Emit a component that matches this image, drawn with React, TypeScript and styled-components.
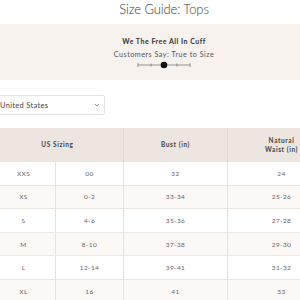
import React from "react";
import styled, { createGlobalStyle } from "styled-components";

const Global = createGlobalStyle`
  html, body { margin: 0; padding: 0; background: #ffffff; overflow: hidden; }
  body { font-family: "Lato", "Open Sans", sans-serif; }
`;

const Page = styled.div`
  width: 346px;
  margin-left: -9px;
  display: flex;
  flex-direction: column;
`;

const Title = styled.h1`
  margin: 0;
  height: 24px;
  padding-top: 2px;
  box-sizing: border-box;
  text-align: center;
  font-family: "Lato", sans-serif;
  font-weight: 300;
  font-size: 13px;
  line-height: 14px;
  color: #3a3a3a;
  letter-spacing: -0.1px;
`;

const Band = styled.section`
  height: 56px;
  background: #f7f2ee;
  display: flex;
  flex-direction: column;
  align-items: center;
  padding-top: 13px;
  box-sizing: border-box;
`;

const Product = styled.div`
  font-family: "Lato", sans-serif;
  font-weight: 700;
  font-size: 7px;
  line-height: 8px;
  letter-spacing: 0.5px;
  color: #333;
`;

const Say = styled.div`
  margin-top: 6px;
  font-family: "Lato", sans-serif;
  font-size: 7.2px;
  line-height: 8px;
  letter-spacing: 0.5px;
  color: #555;
`;

const Scale = styled.svg`
  margin-top: 2px;
  display: block;
`;

const SelectWrap = styled.div`
  margin-top: 15px;
  width: 114px;
  height: 20px;
  box-sizing: border-box;
  border: 1px solid #e6e2df;
  border-radius: 2px;
  display: flex;
  align-items: center;
  justify-content: space-between;
  padding: 0 4px 0 8px;
  font-family: "Lato", sans-serif;
  font-size: 7.5px;
  letter-spacing: 0.3px;
  color: #444;
`;

const Table = styled.table`
  margin-top: 13px;
  width: 344px;
  border-collapse: collapse;
  table-layout: fixed;
  font-family: "Lato", sans-serif;
`;

const HeadCell = styled.th`
  height: 33px;
  background: #ece5e0;
  border-left: 1px solid #e0d8d2;
  border-right: 1px solid #e0d8d2;
  font-weight: 700;
  font-size: 6.5px;
  line-height: 9px;
  letter-spacing: 0.6px;
  color: #444;
  text-align: center;
  padding: 0;
`;

const Row = styled.tr<{ $alt: boolean }>`
  background: ${(p) => (p.$alt ? "#fcf8f6" : "#ffffff")};
  border-top: 1px solid #ece6e2;
`;

const Cell = styled.td`
  height: 22.6px;
  padding: 0;
  border-left: 1px solid #e8e2de;
  border-right: 1px solid #e8e2de;
  text-align: center;
  font-size: 6.5px;
  letter-spacing: 0.4px;
  color: #666;
`;

const rows = [
  ["XXS", "00", "32", "24"],
  ["XS", "0-2", "33-34", "25-26"],
  ["S", "4-6", "35-36", "27-28"],
  ["M", "8-10", "37-38", "29-30"],
  ["L", "12-14", "39-41", "31-32"],
  ["XL", "16", "41", "33"],
];

export default function App() {
  return (
    <>
      <Global />
      <Page>
        <Title>Size Guide: Tops</Title>
        <Band>
          <Product>We The Free All In Cuff</Product>
          <Say>Customers Say: True to Size</Say>
          <Scale width="54" height="8" viewBox="0 0 54 8">
            <line x1="1" y1="4" x2="53" y2="4" stroke="#555" strokeWidth="0.6" />
            <line x1="1" y1="2" x2="1" y2="6" stroke="#555" strokeWidth="0.6" />
            <line x1="14" y1="2.5" x2="14" y2="5.5" stroke="#555" strokeWidth="0.6" />
            <line x1="40" y1="2.5" x2="40" y2="5.5" stroke="#555" strokeWidth="0.6" />
            <line x1="53" y1="2" x2="53" y2="6" stroke="#555" strokeWidth="0.6" />
            <circle cx="27" cy="4" r="3.3" fill="#111" />
          </Scale>
        </Band>
        <SelectWrap>
          <span>United States</span>
          <svg width="6" height="4" viewBox="0 0 6 4">
            <path d="M1 1 L3 3 L5 1" fill="none" stroke="#777" strokeWidth="0.8" />
          </svg>
        </SelectWrap>
        <Table>
          <colgroup>
            <col style={{ width: 64 }} />
            <col style={{ width: 68 }} />
            <col style={{ width: 104 }} />
            <col style={{ width: 108 }} />
          </colgroup>
          <thead>
            <tr>
              <HeadCell colSpan={2}>US Sizing</HeadCell>
              <HeadCell>Bust (in)</HeadCell>
              <HeadCell>
                Natural
                <br />
                Waist (in)
              </HeadCell>
            </tr>
          </thead>
          <tbody>
            {rows.map((r, i) => (
              <Row key={r[0]} $alt={i % 2 === 1}>
                {r.map((c, j) => (
                  <Cell key={j}>{c}</Cell>
                ))}
              </Row>
            ))}
          </tbody>
        </Table>
      </Page>
    </>
  );
}
